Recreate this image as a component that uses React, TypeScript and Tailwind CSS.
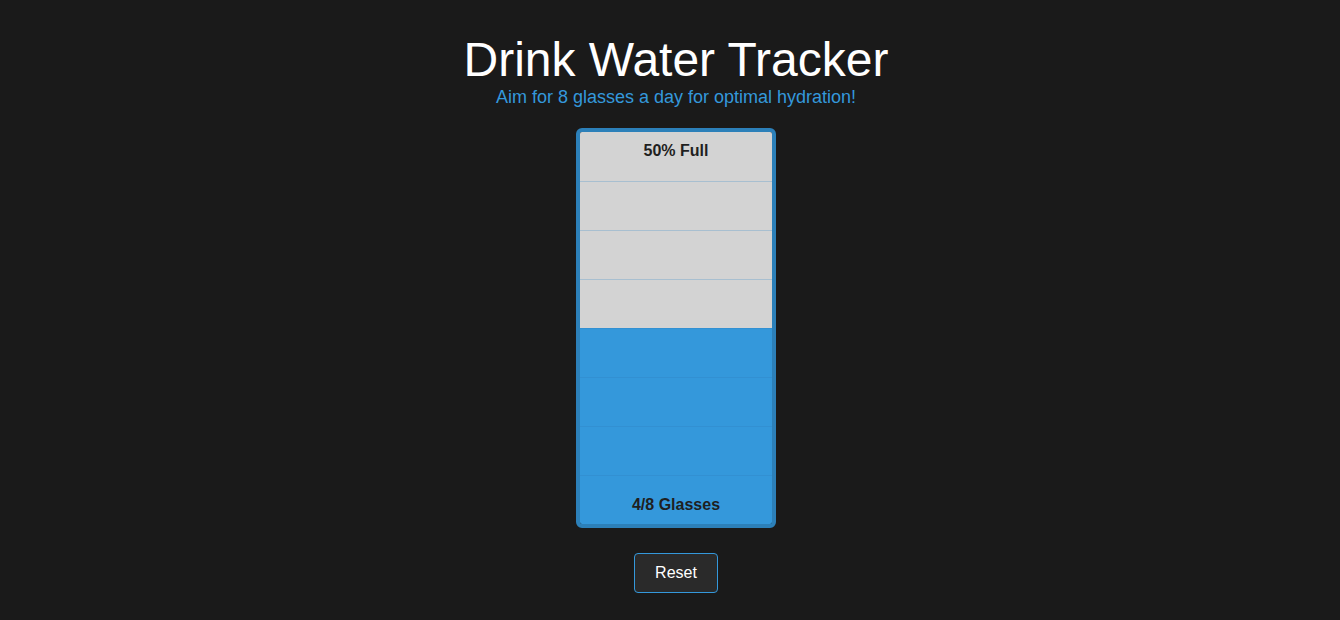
import React, { useState } from 'react';

const TOTAL = 8;

export default function App() {
  const [filled, setFilled] = useState(4);
  const pct = Math.round((filled / TOTAL) * 100);

  return (
    <div className="min-h-[620px] w-full bg-[#1a1a1a] flex flex-col items-center pt-[36px] pl-[12px] font-['Liberation_Sans',Arial,sans-serif]">
      <h1 className="text-white text-[48px] leading-[48px]">Drink Water Tracker</h1>
      <p className="text-[#3498db] text-[18px] leading-[22px] mt-[2px]">
        Aim for 8 glasses a day for optimal hydration!
      </p>

      <div className="mt-[20px] w-[200px] border-4 border-[#2c80b9] rounded-[6px] overflow-hidden flex flex-col">
        {Array.from({ length: TOTAL }).map((_, i) => {
          const isFull = i >= TOTAL - filled;
          const isFirst = i === 0;
          const isLast = i === TOTAL - 1;
          return (
            <div
              key={i}
              onClick={() => setFilled(TOTAL - i)}
              className={`h-[49px] text-center text-[16px] font-bold text-[#1f1f1f] cursor-pointer ${
                isFirst ? '' : 'border-t'
              } ${isFull ? 'bg-[#3498db] border-[#3290d2]' : 'bg-[#d3d3d3] border-[#a8bfd0]'}`}
            >
              {isFirst && <div className="pt-[10px] leading-[18px]">{pct}% Full</div>}
              {isLast && <div className="pt-[20px] leading-[18px]">{filled}/{TOTAL} Glasses</div>}
            </div>
          );
        })}
      </div>

      <button
        onClick={() => setFilled(0)}
        className="mt-[25px] w-[84px] h-[40px] rounded-[4px] border border-[#3498db] bg-[#2a2a2a] text-white text-[16px]"
      >
        Reset
      </button>
    </div>
  );
}
